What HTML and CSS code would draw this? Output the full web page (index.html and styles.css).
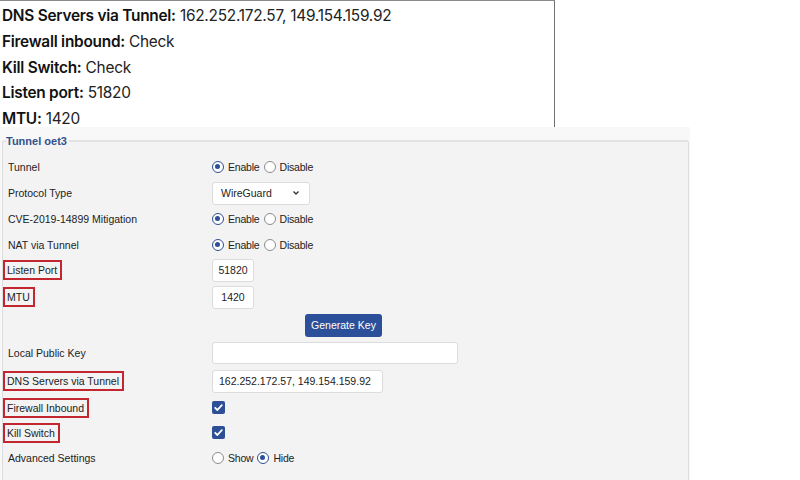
FILE: index.html
```html
<!DOCTYPE html>
<html lang="en">
<head>
<meta charset="UTF-8">
<meta name="viewport" content="width=device-width, initial-scale=1.0">
<title>Tunnel oet3</title>
<link rel="stylesheet" href="styles.css">
</head>
<body>
<div class="note">
    <p><b>DNS Servers via Tunnel:</b> 162.252.172.57, 149.154.159.92</p>
    <p><b>Firewall inbound:</b> Check</p>
    <p><b>Kill Switch:</b> Check</p>
    <p><b>Listen port:</b> 51820</p>
    <p><b>MTU:</b> 1420</p>
</div>
<div class="panel">
    <fieldset class="tunnel">
        <legend>Tunnel oet3</legend>
        <div class="row">
            <div class="label">Tunnel</div>
            <div class="control">
                <span class="radio on"></span><span class="opt">Enable</span>
                <span class="radio"></span><span class="opt">Disable</span>
            </div>
        </div>
        <div class="row">
            <div class="label">Protocol Type</div>
            <div class="control">
                <div class="select">WireGuard
                    <svg width="8" height="6" viewBox="0 0 8 6"><path d="M1.5 1.5 L4 4 L6.5 1.5" fill="none" stroke="#333" stroke-width="1.3"/></svg>
                </div>
            </div>
        </div>
        <div class="row">
            <div class="label">CVE-2019-14899 Mitigation</div>
            <div class="control">
                <span class="radio on"></span><span class="opt">Enable</span>
                <span class="radio"></span><span class="opt">Disable</span>
            </div>
        </div>
        <div class="row short">
            <div class="label">NAT via Tunnel</div>
            <div class="control">
                <span class="radio on"></span><span class="opt">Enable</span>
                <span class="radio"></span><span class="opt">Disable</span>
            </div>
        </div>
        <div class="row">
            <div class="label"><span class="mark">Listen Port</span></div>
            <div class="control"><div class="field small">51820</div></div>
        </div>
        <div class="row tall">
            <div class="label"><span class="mark">MTU</span></div>
            <div class="control"><div class="field small">1420</div></div>
        </div>
        <div class="row tall">
            <div class="label"></div>
            <div class="control"><button class="btn">Generate Key</button></div>
        </div>
        <div class="row tall">
            <div class="label">Local Public Key</div>
            <div class="control"><div class="field wide"></div></div>
        </div>
        <div class="row tall">
            <div class="label"><span class="mark">DNS Servers via Tunnel</span></div>
            <div class="control"><div class="field dns">162.252.172.57, 149.154.159.92</div></div>
        </div>
        <div class="row short">
            <div class="label"><span class="mark">Firewall Inbound</span></div>
            <div class="control">
                <span class="check"><svg width="13" height="13" viewBox="0 0 13 13"><path d="M3.2 6.8 L5.4 9 L9.8 4.2" fill="none" stroke="#fff" stroke-width="1.8" stroke-linecap="round" stroke-linejoin="round"/></svg></span>
            </div>
        </div>
        <div class="row short">
            <div class="label"><span class="mark">Kill Switch</span></div>
            <div class="control">
                <span class="check"><svg width="13" height="13" viewBox="0 0 13 13"><path d="M3.2 6.8 L5.4 9 L9.8 4.2" fill="none" stroke="#fff" stroke-width="1.8" stroke-linecap="round" stroke-linejoin="round"/></svg></span>
            </div>
        </div>
        <div class="row">
            <div class="label">Advanced Settings</div>
            <div class="control">
                <span class="radio"></span><span class="opt">Show</span>
                <span class="radio on"></span><span class="opt">Hide</span>
            </div>
        </div>
    </fieldset>
</div>
</body>
</html>
```

FILE: styles.css
```css
body {
    margin: 0;
    padding: 0;
    background-color: #fff;
    font-family: "Liberation Sans", Arial, sans-serif;
}
.note {
    width: 555px;
    height: 127px;
    border-top: 1px solid #8a8a8a;
    border-right: 1px solid #707070;
    padding: 2px 0 0 2px;
    box-sizing: border-box;
    font-family: Inter, "Noto Sans", sans-serif;
    font-size: 15.4px;
    letter-spacing: -0.25px;
    color: #222;
}
.note p {
    margin: 0;
    line-height: 25.8px;
}
.note b {
    font-weight: 600;
    color: #111;
}
.panel {
    width: 690px;
    background-color: #f8f8f8;
    padding: 8px 1px 20px 2px;
    box-sizing: border-box;
}
.tunnel {
    margin: 0;
    padding: 7px 5px 10px 5px;
    border: 1px solid #dcdcdc;
    border-top: 2px solid #e2e2e2;
    border-radius: 3px;
    background-color: #f3f3f3;
    font-size: 10.5px;
    color: #222;
}
.tunnel legend {
    margin-left: -2px;
    padding: 0 2px 0 0;
    font-size: 11px;
    font-weight: bold;
    color: #34528f;
}
.row {
    display: flex;
    align-items: center;
    height: 26px;
}
.row.tall {
    height: 28px;
}
.row.short {
    height: 25px;
}
.label {
    width: 204px;
}
.mark {
    display: inline-block;
    border: 2px solid #c3262f;
    padding: 2px 3px 2px 2px;
    margin-left: -5px;
}
.control {
    display: flex;
    align-items: center;
}
.radio {
    width: 12px;
    height: 12px;
    box-sizing: border-box;
    border: 1px solid #8c8c8c;
    border-radius: 50%;
    background-color: #fff;
    position: relative;
}
.radio.on {
    border: 1.5px solid #2d4f95;
}
.radio.on::after {
    content: "";
    position: absolute;
    left: 2px;
    top: 2px;
    width: 5px;
    height: 5px;
    border-radius: 50%;
    background-color: #2d4f95;
}
.opt {
    margin: 0 4px 0 4px;
    letter-spacing: -0.2px;
}
.select {
    width: 98px;
    height: 23px;
    box-sizing: border-box;
    border: 1px solid #dcdcdc;
    border-radius: 3px;
    background-color: #fff;
    display: flex;
    align-items: center;
    justify-content: space-between;
    padding: 0 9px 0 8px;
}
.field {
    height: 23px;
    box-sizing: border-box;
    border: 1px solid #dcdcdc;
    border-radius: 3px;
    background-color: #fff;
    display: flex;
    align-items: center;
}
.field.small {
    width: 42px;
    justify-content: center;
}
.field.wide {
    width: 246px;
    height: 22px;
}
.field.dns {
    width: 171px;
    padding-left: 6px;
}
.btn {
    margin-left: 93px;
    width: 77px;
    height: 23px;
    border: none;
    border-radius: 3px;
    background-color: #2c4f99;
    color: #fff;
    font-family: "Liberation Sans", Arial, sans-serif;
    font-size: 10.5px;
    padding: 0;
}
.check {
    width: 13px;
    height: 13px;
    border-radius: 2px;
    background-color: #2d4f95;
    display: block;
}
.check svg {
    display: block;
}
```
